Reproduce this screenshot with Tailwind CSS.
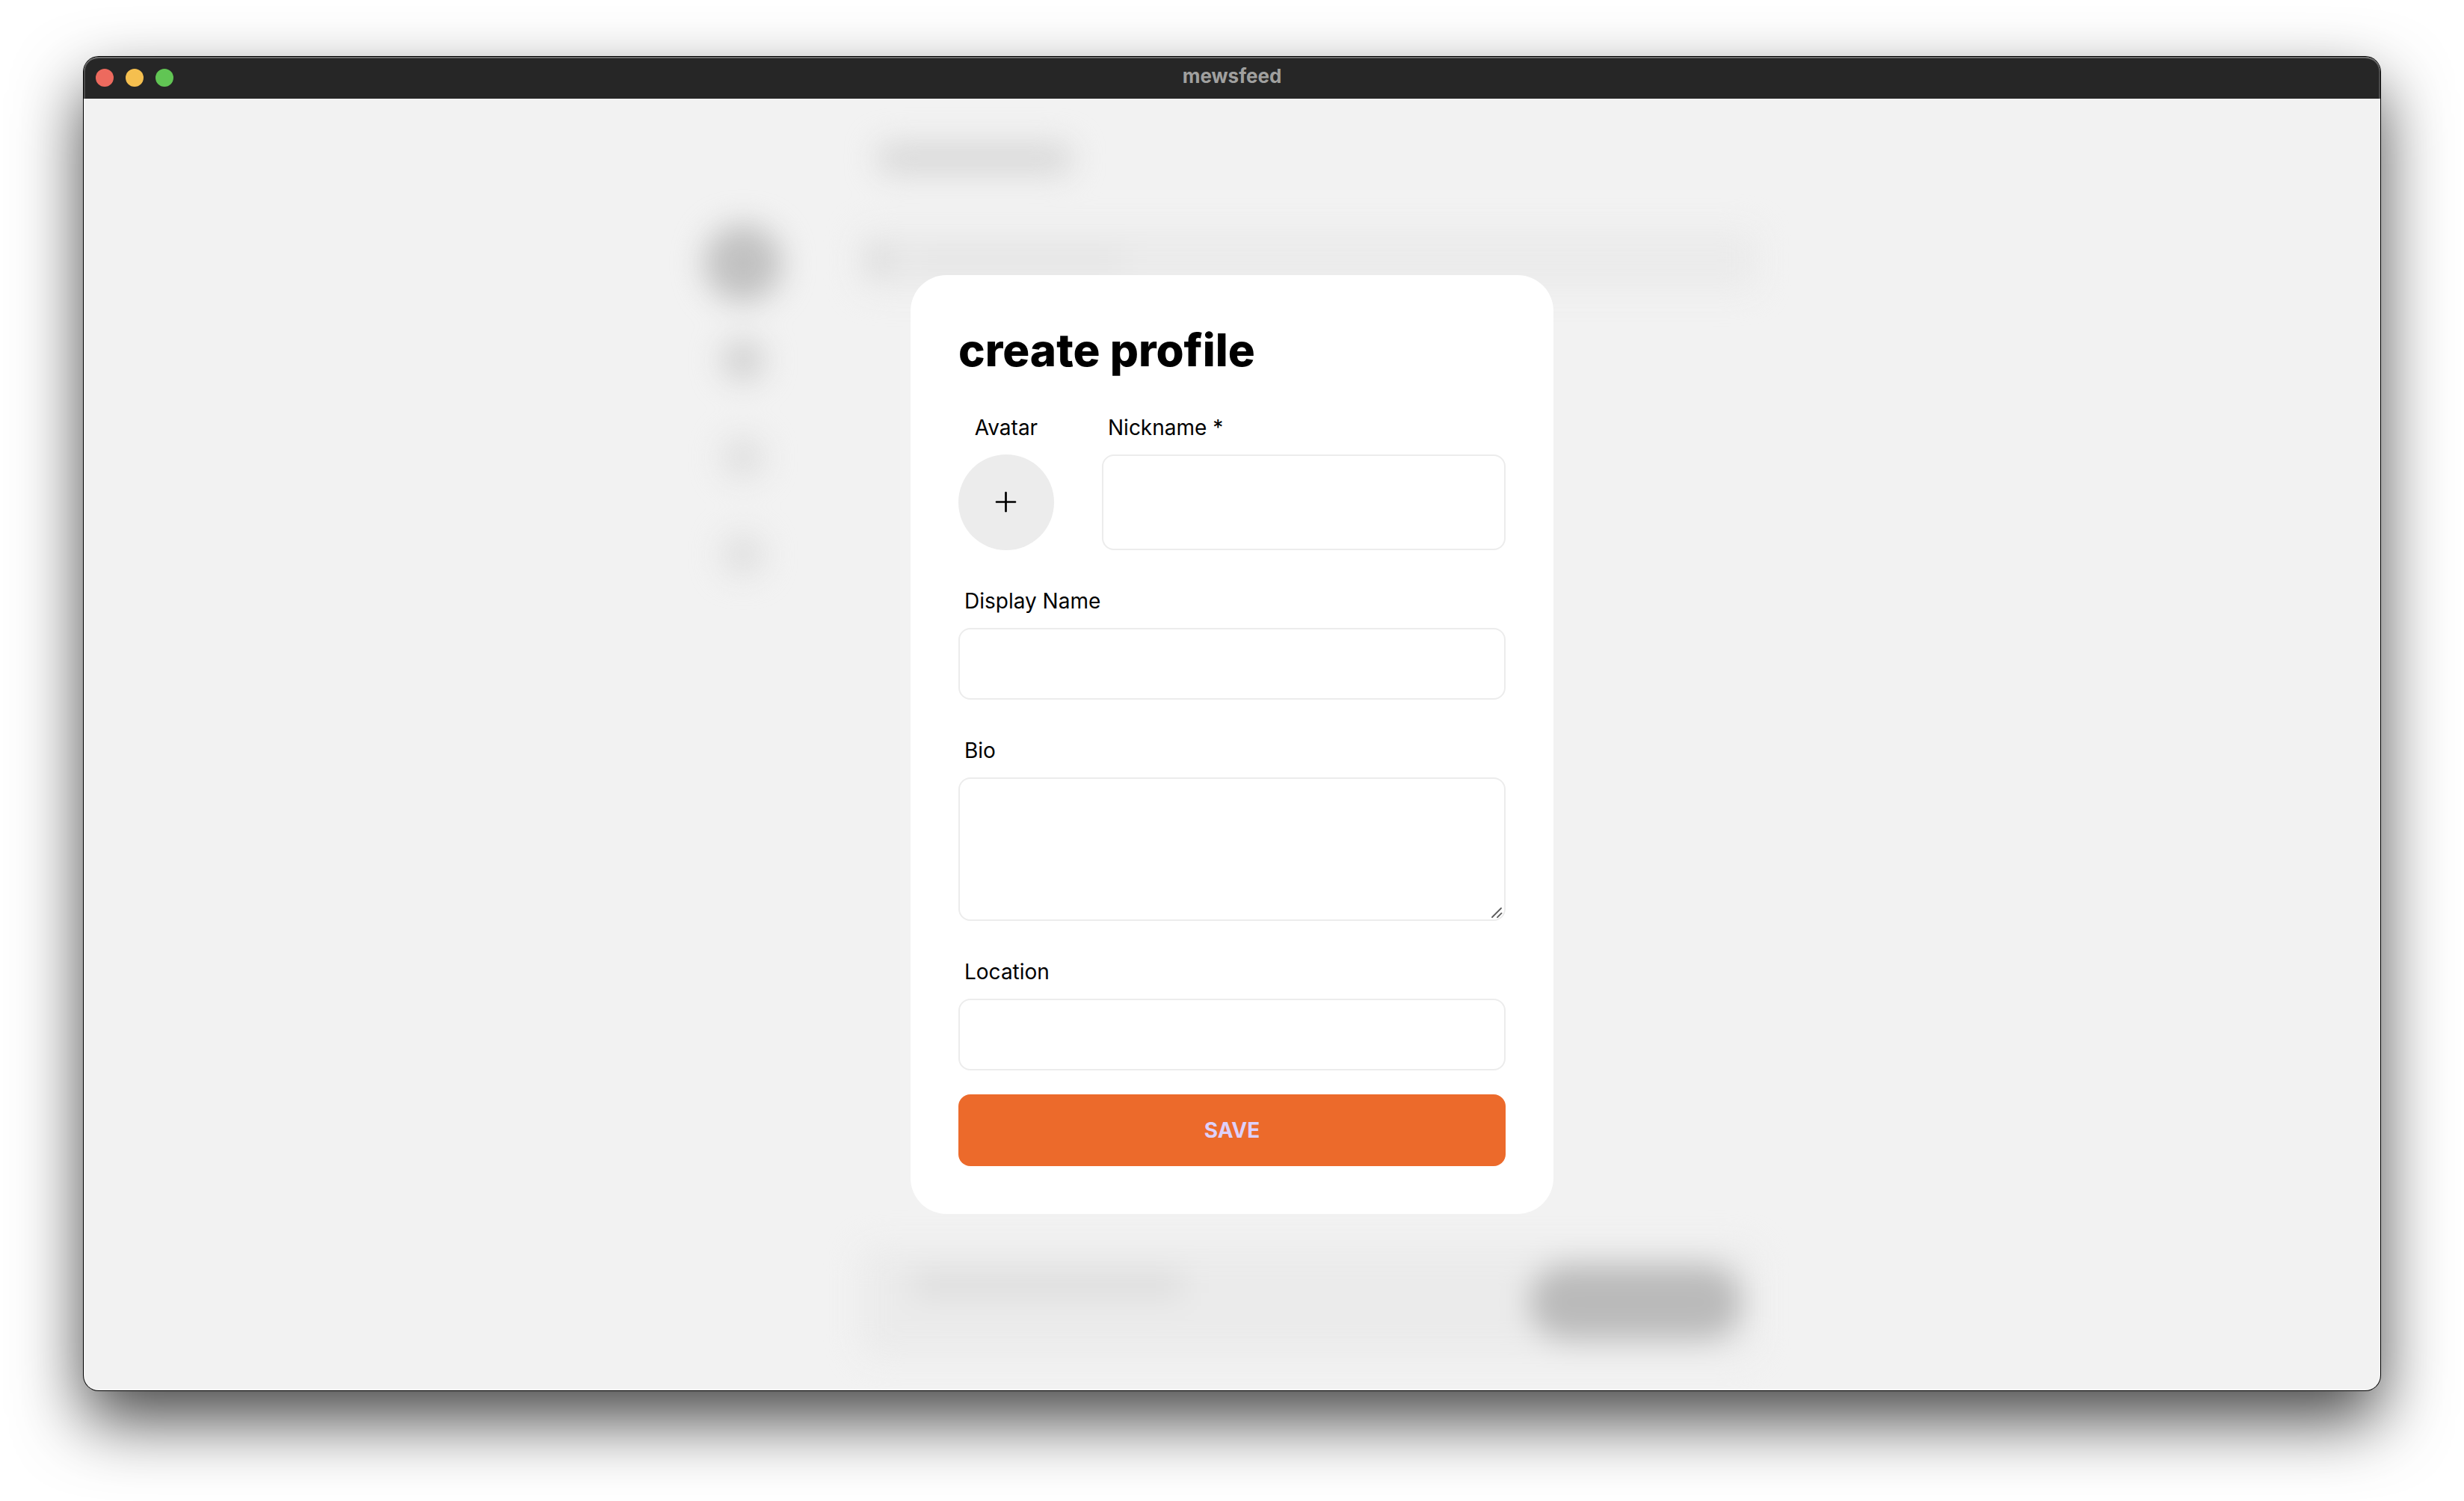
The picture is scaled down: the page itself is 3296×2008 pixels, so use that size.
<!DOCTYPE html>
<html lang="en">
<head>
<meta charset="utf-8">
<title>mewsfeed</title>
<script src="https://cdn.jsdelivr.net/npm/@tailwindcss/browser@4"></script>
</head>
<body class="flex min-h-screen bg-white px-28 pt-[76px] pb-[148px] font-['Inter','Liberation_Sans',sans-serif] text-black">
  <div class="flex flex-1 flex-col overflow-hidden rounded-[20px] bg-[#f2f2f2] shadow-[0_0_0_1px_#000,0_40px_90px_rgba(0,0,0,0.72)]">

    <!-- Title bar -->
    <header class="grid h-14 grid-cols-[1fr_auto_1fr] items-center rounded-t-[20px] bg-[#262626] px-4 shadow-[inset_0_2px_0_#6c6c6c,inset_2px_0_0_#4a4a4a,inset_-2px_0_0_#4a4a4a]">
      <div class="flex gap-4">
        <button type="button" aria-label="Close" class="size-6 rounded-full bg-[#ed6a5e]"></button>
        <button type="button" aria-label="Minimize" class="size-6 rounded-full bg-[#f5bf4f]"></button>
        <button type="button" aria-label="Zoom" class="size-6 rounded-full bg-[#61c554]"></button>
      </div>
      <p class="pb-1 text-[26px] leading-8 font-bold text-[#a0a09f]">mewsfeed</p>
    </header>

    <main class="grid flex-1 grid-cols-1 grid-rows-1">
      <!-- Feed behind the dialog, out of focus -->
      <div aria-hidden="true" class="col-start-1 row-start-1 flex justify-center gap-[108px] overflow-hidden blur-[20px]">
        <div class="flex w-24 flex-col items-center gap-[74px] pt-48">
          <div class="-my-6 size-[104px] rounded-full bg-[#c1c1c1]"></div>
          <div class="size-14 rounded-full bg-[#d0d0d0]"></div>
          <div class="size-14 rounded-full bg-[#dfdfdf]"></div>
          <div class="size-14 rounded-full bg-[#dfdfdf]"></div>
        </div>
        <div class="flex w-[1200px] flex-col pt-[60px] pb-[44px]">
          <div class="ml-6 h-10 w-[260px] rounded-2xl bg-[#d7d7d7]"></div>
          <div class="mt-[76px] flex h-20 items-center gap-6 rounded-2xl bg-[#ebebeb] px-2">
            <div class="size-10 rounded-full bg-[#dadada]"></div>
            <div class="h-5 w-[280px] bg-[#e1e1e1]"></div>
          </div>
          <div class="mt-auto flex h-[148px] items-center justify-between rounded-3xl bg-[#ebebeb] pr-5 pl-[72px]">
            <div class="mb-12 h-8 w-[360px] bg-[#dcdcdc]"></div>
            <div class="h-[100px] w-[284px] rounded-full bg-[#bababa]"></div>
          </div>
        </div>
      </div>

      <!-- Create profile dialog -->
      <form role="dialog" aria-labelledby="dialog-title" class="relative col-start-1 row-start-1 flex w-[860px] max-w-full flex-col self-center justify-self-center rounded-[48px] bg-white p-16">
        <h1 id="dialog-title" class="mb-12 text-[60px] leading-[72px] font-extrabold">create profile</h1>

        <div class="flex gap-16">
          <div class="flex flex-col items-center gap-4">
            <label for="avatar" class="text-[28px] leading-10">Avatar</label>
            <button id="avatar" type="button" aria-label="Avatar" class="flex size-32 items-center justify-center rounded-full bg-[#ececec]">
              <svg class="size-8" viewBox="0 0 32 32" fill="none" stroke="#000" stroke-width="2.7" stroke-linecap="round"><path d="M15.500 3v25M3 15.500h25"/></svg>
            </button>
          </div>
          <div class="flex flex-1 flex-col gap-4">
            <label for="nickname" class="px-2 text-[28px] leading-10">Nickname *</label>
            <input id="nickname" type="text" required class="h-32 w-full rounded-2xl border-2 border-[#ececec] bg-white px-8 text-[28px] shadow-none outline-none">
          </div>
        </div>

        <div class="mt-12 flex flex-col gap-4">
          <label for="display-name" class="px-2 text-[28px] leading-10">Display Name</label>
          <input id="display-name" type="text" class="h-24 w-full rounded-2xl border-2 border-[#ececec] bg-white px-8 text-[28px] outline-none">
        </div>

        <div class="mt-12 flex flex-col gap-4">
          <label for="bio" class="px-2 text-[28px] leading-10">Bio</label>
          <div class="relative flex">
            <textarea id="bio" class="h-48 w-full resize-none rounded-2xl border-2 border-[#ececec] bg-white px-8 py-4 text-[28px] outline-none"></textarea>
            <svg class="pointer-events-none absolute right-1 bottom-1 size-4" viewBox="0 0 16 16" fill="none" stroke="#5c5c5c" stroke-width="1.8" stroke-linecap="round"><path d="M2 15 14 3M9 15.200l5.500-5.500"/></svg>
          </div>
        </div>

        <div class="mt-12 flex flex-col gap-4">
          <label for="location" class="px-2 text-[28px] leading-10">Location</label>
          <input id="location" type="text" class="h-24 w-full rounded-2xl border-2 border-[#ececec] bg-white px-8 text-[28px] outline-none">
        </div>

        <button type="submit" class="mt-8 h-24 rounded-2xl bg-[#ec6a2b] text-[28px] leading-10 font-bold text-[#ddd0fb]">SAVE</button>
      </form>
    </main>
  </div>
</body>
</html>
